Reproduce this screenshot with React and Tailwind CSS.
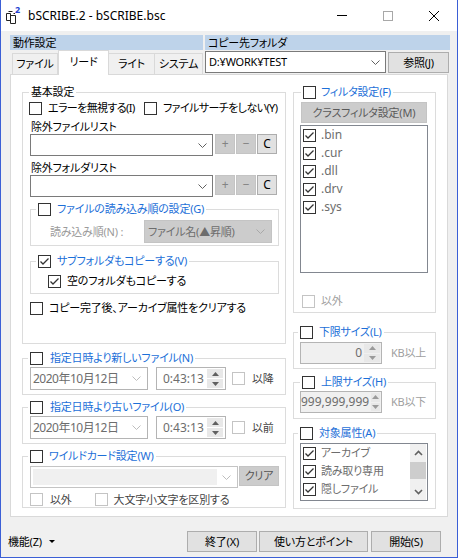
import React from "react";

const blue = "text-[#1c6fd8]";

function Box({ checked = false, dim = false }) {
  return (
    <span
      className={`flex h-[13px] w-[13px] shrink-0 items-center justify-center border bg-white ${
        dim ? "border-[#c4c4c4]" : "border-[#333333]"
      }`}
    >
      {checked && (
        <svg width="11" height="11" viewBox="0 0 11 11">
          <path d="M1.5 5.5L4 8L9.5 2.5" fill="none" stroke="#333333" strokeWidth="1.3" />
        </svg>
      )}
    </span>
  );
}

function Chevron({ color = "#606060" }) {
  return (
    <svg width="9" height="5" viewBox="0 0 9 5">
      <path d="M0.5 0.5L4.5 4.5L8.5 0.5" fill="none" stroke={color} />
    </svg>
  );
}

function Spin({ dim = false }) {
  const c = dim ? "#9a9a9a" : "#606060";
  return (
    <div className="flex h-full w-[16px] flex-col gap-px">
      <div className="flex flex-1 items-center justify-center bg-[#e8e8e8]">
        <svg width="7" height="4" viewBox="0 0 7 4">
          <path d="M0 4L3.5 0L7 4Z" fill={c} />
        </svg>
      </div>
      <div className="flex flex-1 items-center justify-center bg-[#e8e8e8]">
        <svg width="7" height="4" viewBox="0 0 7 4">
          <path d="M0 0L3.5 4L7 0Z" fill={c} />
        </svg>
      </div>
    </div>
  );
}

function Group({ label, legendClass = "", className = "", children }) {
  return (
    <fieldset className={`border border-[#dcdcdc] ${className}`}>
      <legend className={legendClass}>{label}</legend>
      {children}
    </fieldset>
  );
}

function CheckLegend({ text, checked = false, gap = "ml-[6px]" }) {
  return (
    <span className="flex h-[14px] items-center leading-[14px]">
      <Box checked={checked} />
      <span className={`${gap} ${blue}`}>{text}</span>
    </span>
  );
}

function Combo({ w, children }) {
  return (
    <div className={`flex h-[22px] items-center border border-[#7a7a7a] bg-white pl-[3px] pr-[5px] ${w}`}>
      <span className="flex-1">{children}</span>
      <Chevron />
    </div>
  );
}

function SmallBtn({ children, on = false }) {
  return (
    <div
      className={`flex h-[20px] w-[20px] items-center justify-center border text-[12px] ${
        on ? "border-[#adadad] bg-[#e1e1e1] text-black" : "border-[#c4c4c4] bg-[#cccccc] text-[#838383]"
      }`}
    >
      {children}
    </div>
  );
}

function Btn({ className = "", children }) {
  return (
    <div className={`flex h-[21px] items-center justify-center border border-[#adadad] bg-[#e1e1e1] ${className}`}>
      {children}
    </div>
  );
}

function DateRow({ tail }) {
  return (
    <div className="mt-[2px] flex h-[23px] items-center pl-[7px]">
      <div className="flex h-[23px] w-[118px] items-center border border-[#b4b4b4] bg-white pl-[2px] pr-[6px] text-[12px] tracking-[-0.5px] text-[#6d6d6d]">
        <span className="flex-1">2020年10月12日</span>
        <Chevron color="#bdbdbd" />
      </div>
      <div className="ml-[8px] flex h-[23px] w-[70px] items-center border border-[#b4b4b4] bg-white py-px pl-[6px] pr-[2px] text-[12px] tracking-normal text-[#6d6d6d]">
        <span className="flex-1">0:43:13</span>
        <Spin />
      </div>
      <span className="ml-[6px]">
        <Box dim />
      </span>
      <span className="ml-[7px] text-[#444444]">{tail}</span>
    </div>
  );
}

function NumBox({ value }) {
  return (
    <div className="ml-[6px] flex h-[22px] w-[82px] items-center border border-[#b4b4b4] bg-[#f0f0f0] py-px pr-px text-[12px] tracking-normal text-[#6d6d6d]">
      <span className="flex-1 pr-[2px] text-right">{value}</span>
      <Spin dim />
    </div>
  );
}

export default function App() {
  return (
    <div className="box-border flex h-[558px] w-[458px] flex-col overflow-hidden whitespace-nowrap border-x border-b border-[#3b5fd6] bg-[#f0f0f0] font-['Noto_Sans','Noto_Sans_CJK_JP',sans-serif] text-[11px] leading-[16px] tracking-[-0.2px] text-black [font-feature-settings:'palt']">
      {/* title bar */}
      <div className="flex h-[31px] shrink-0 items-center bg-white text-[12px] tracking-normal">
        <span className="relative ml-[4px] h-[16px] w-[16px]">
          <svg width="16" height="16" viewBox="0 0 16 16">
            <path d="M1.5 5.5H5.5V12.5H1.5Z M3.5 3.5H7.5" fill="none" stroke="#222" />
            <path d="M5.5 7.5H10.5V15.5H5.5Z M8.5 5.5H10" fill="none" stroke="#222" />
          </svg>
          <span className="absolute -top-[3px] left-[10px] text-[9px] font-bold leading-[10px] text-[#2040d0]">2</span>
        </span>
        <span className="ml-[7px]">bSCRIBE.2 - bSCRIBE.bsc</span>
        <div className="ml-auto flex h-full">
          <div className="flex w-[46px] items-center justify-center">
            <span className="h-px w-[10px] bg-black" />
          </div>
          <div className="flex w-[46px] items-center justify-center">
            <span className="h-[10px] w-[10px] border border-[#a8a8a8]" />
          </div>
          <div className="flex w-[46px] items-center justify-center">
            <svg width="10" height="10" viewBox="0 0 10 10">
              <path d="M0 0L10 10M10 0L0 10" stroke="#000" strokeWidth="1" />
            </svg>
          </div>
        </div>
      </div>

      {/* header + tabs */}
      <div className="mt-[4px] flex pl-[9px]">
        <div className="flex w-[193px] flex-col">
          <div className="h-[15px] bg-[#bed3ea] pl-[3px] leading-[15px]">動作設定</div>
          <div className="flex h-[24px] items-end">
            <div className="ml-[2px] flex h-[21px] w-[46px] items-center justify-center border border-b-0 border-[#d9d9d9]">ファイル</div>
            <div className="relative z-10 -mb-px flex h-[25px] w-[51px] items-center justify-center border border-b-0 border-[#d9d9d9] bg-white pb-[2px]">リード</div>
            <div className="flex h-[21px] w-[46px] items-center justify-center border border-b-0 border-l-0 border-[#d9d9d9]">ライト</div>
            <div className="flex h-[21px] w-[48px] items-center justify-center border border-b-0 border-l-0 border-[#d9d9d9]">システム</div>
          </div>
        </div>
        <div className="ml-[2px] flex w-[245px] flex-col">
          <div className="h-[15px] bg-[#bed3ea] pl-[3px] leading-[15px]">コピー先フォルダ</div>
          <div className="mt-px flex items-start">
            <Combo w="w-[181px]">D:¥WORK¥TEST</Combo>
            <Btn className="ml-[2px] mt-px h-[19px] w-[61px]">参照(J)</Btn>
          </div>
        </div>
      </div>

      {/* tab page */}
      <div className="ml-[9px] flex h-[443px] w-[438px] shrink-0 border border-[#d9d9d9] bg-white pl-[11px]">
        {/* left column */}
        <div className="flex w-[264px] flex-col">
          <Group
            label="基本設定"
            legendClass="ml-[6px] h-[16px] px-[2px] leading-[16px]"
            className="mt-[9px] h-[260px]"
          >
            <div className="flex flex-col pl-[6px]">
              <div className="flex h-[16px] items-center tracking-[-0.6px]">
                <div className="flex w-[115px] items-center">
                  <Box />
                  <span className="ml-[6px]">エラーを無視する(I)</span>
                </div>
                <Box />
                <span className="ml-[6px]">ファイルサーチをしない(Y)</span>
              </div>
              <div className="ml-[2px] mt-[3px] h-[15px] leading-[15px]">除外ファイルリスト</div>
              <div className="ml-px flex h-[22px] items-start">
                <Combo w="w-[183px]" />
                <div className="ml-[2px] flex gap-px">
                  <SmallBtn>+</SmallBtn>
                  <SmallBtn>−</SmallBtn>
                  <SmallBtn on>C</SmallBtn>
                </div>
              </div>
              <div className="ml-[2px] mt-[4px] h-[15px] leading-[15px]">除外フォルダリスト</div>
              <div className="ml-px flex h-[22px] items-start">
                <Combo w="w-[183px]" />
                <div className="ml-[2px] flex gap-px">
                  <SmallBtn>+</SmallBtn>
                  <SmallBtn>−</SmallBtn>
                  <SmallBtn on>C</SmallBtn>
                </div>
              </div>

              <Group
                label={<CheckLegend text="ファイルの読み込み順の設定(G)" />}
                legendClass="ml-[5px] px-[2px]"
                className="ml-px mt-[5px] h-[44px] w-[249px]"
              >
                <div className="mt-[4px] flex h-[23px] items-center pl-[19px]">
                  <span className="text-[#9a9a9a]">読み込み順(N) :</span>
                  <div className="ml-auto mr-[6px] flex h-[23px] w-[128px] items-center border border-[#c4c4c4] bg-[#cccccc] pl-[3px] pr-[6px] text-[#6d6d6d]">
                    <span className="flex-1">ファイル名(▲昇順)</span>
                    <Chevron color="#a8a8a8" />
                  </div>
                </div>
              </Group>

              <Group
                label={<CheckLegend text="サブフォルダもコピーする(V)" checked />}
                legendClass="ml-[5px] px-[2px]"
                className="ml-px mt-[8px] h-[40px] w-[249px]"
              >
                <div className="mt-[5px] flex h-[16px] items-center pl-[17px]">
                  <Box checked />
                  <span className="ml-[6px]">空のフォルダもコピーする</span>
                </div>
              </Group>

              <div className="ml-px mt-[6px] flex h-[16px] items-center">
                <Box />
                <span className="ml-[6px]">コピー完了後、アーカイブ属性をクリアする</span>
              </div>
            </div>
          </Group>

          <Group
            label={<CheckLegend text="指定日時より新しいファイル(N)" gap="ml-[7px]" />}
            legendClass="ml-[5px] px-[2px]"
            className="mt-[7px] h-[44px]"
          >
            <DateRow tail="以降" />
          </Group>

          <Group
            label={<CheckLegend text="指定日時より古いファイル(O)" gap="ml-[7px]" />}
            legendClass="ml-[5px] px-[2px]"
            className="mt-[5px] h-[44px]"
          >
            <DateRow tail="以前" />
          </Group>

          <Group
            label={<CheckLegend text="ワイルドカード設定(W)" />}
            legendClass="ml-[5px] px-[2px]"
            className="mt-[5px] h-[59px]"
          >
            <div className="flex flex-col pl-[7px]">
              <div className="mt-[3px] flex items-start">
                <div className="flex h-[22px] w-[208px] items-center border border-[#c4c4c4] bg-white p-[2px]">
                  <span className="h-full flex-1 bg-[#f0f0f0]" />
                  <span className="flex w-[18px] justify-center">
                    <Chevron color="#bdbdbd" />
                  </span>
                </div>
                <div className="ml-px flex h-[20px] w-[40px] items-center justify-center border border-[#c4c4c4] bg-[#cccccc] text-[#555555]">
                  クリア
                </div>
              </div>
              <div className="mt-[5px] flex h-[13px] items-center">
                <Box dim />
                <span className="ml-[7px] text-[#444444]">以外</span>
                <span className="ml-[23px]">
                  <Box dim />
                </span>
                <span className="ml-[6px] text-[#444444]">大文字小文字を区別する</span>
              </div>
            </div>
          </Group>
        </div>

        {/* right column */}
        <div className="ml-[7px] flex w-[143px] flex-col">
          <Group
            label={<CheckLegend text="フィルタ設定(F)" gap="ml-[5px]" />}
            legendClass="ml-[7px] px-[2px]"
            className="mt-[10px] h-[228px]"
          >
            <div className="flex flex-col">
              <div className="ml-[7px] mt-[3px] flex h-[21px] w-[126px] items-center justify-center border border-[#c4c4c4] bg-[#cccccc] text-[#5a5a5a]">
                クラスフィルタ設定(M)
              </div>
              <div className="ml-[6px] mt-[2px] flex h-[148px] w-[128px] flex-col border border-[#828790] bg-white pl-[2px]">
                {[".bin", ".cur", ".dll", ".drv", ".sys"].map((x) => (
                  <div key={x} className="flex h-[18px] items-center">
                    <Box checked />
                    <span className="ml-[5px] text-[12px] tracking-normal text-[#6d6d6d]">{x}</span>
                  </div>
                ))}
              </div>
              <div className="ml-[8px] mt-[20px] flex h-[16px] items-center">
                <Box dim />
                <span className="ml-[6px] text-[#a0a0a0]">以外</span>
              </div>
            </div>
          </Group>

          <Group
            label={<CheckLegend text="下限サイズ(L)" />}
            legendClass="ml-[4px] px-[2px]"
            className="mt-[12px] h-[44px]"
          >
            <div className="mt-[3px] flex items-center">
              <NumBox value="0" />
              <span className="ml-[9px] text-[#a0a0a0]">KB以上</span>
            </div>
          </Group>

          <Group
            label={<CheckLegend text="上限サイズ(H)" />}
            legendClass="ml-[6px] px-[2px]"
            className="mt-[6px] h-[44px]"
          >
            <div className="mt-[2px] flex items-center">
              <NumBox value="999,999,999" />
              <span className="ml-[9px] text-[#a0a0a0]">KB以下</span>
            </div>
          </Group>

          <Group
            label={<CheckLegend text="対象属性(A)" />}
            legendClass="ml-[4px] px-[2px]"
            className="mt-[7px] h-[83px]"
          >
            <div className="ml-[6px] mt-[3px] flex h-[58px] w-[128px] border border-[#828790] bg-white">
              <div className="flex flex-1 flex-col pl-[2px]">
                {["アーカイブ", "読み取り専用", "隠しファイル"].map((x) => (
                  <div key={x} className="flex h-[18px] items-center">
                    <Box checked />
                    <span className="ml-[5px] text-[#6d6d6d]">{x}</span>
                  </div>
                ))}
              </div>
              <div className="mr-px flex w-[16px] flex-col bg-[#f0f0f0]">
                <div className="flex h-[17px] items-center justify-center">
                  <svg width="9" height="6" viewBox="0 0 9 6">
                    <path d="M1 5L4.5 1.5L8 5" fill="none" stroke="#606060" strokeWidth="1.6" />
                  </svg>
                </div>
                <div className="mt-px h-[17px] bg-[#cdcdcd]" />
                <div className="flex-1" />
                <div className="flex h-[17px] items-center justify-center">
                  <svg width="9" height="6" viewBox="0 0 9 6">
                    <path d="M1 1L4.5 4.5L8 1" fill="none" stroke="#606060" strokeWidth="1.6" />
                  </svg>
                </div>
              </div>
            </div>
          </Group>
        </div>
      </div>

      {/* bottom bar */}
      <div className="mt-[14px] flex h-[21px] items-center">
        <div className="ml-[7px] flex items-center">
          <span>機能(Z)</span>
          <svg className="ml-[7px]" width="6" height="3" viewBox="0 0 6 3">
            <path d="M0 0H6L3 3Z" fill="#000" />
          </svg>
        </div>
        <Btn className="ml-auto w-[70px]">終了(X)</Btn>
        <Btn className="ml-[2px] w-[109px]">使い方とポイント</Btn>
        <Btn className="ml-[3px] mr-[16px] w-[70px]">開始(S)</Btn>
      </div>
    </div>
  );
}
